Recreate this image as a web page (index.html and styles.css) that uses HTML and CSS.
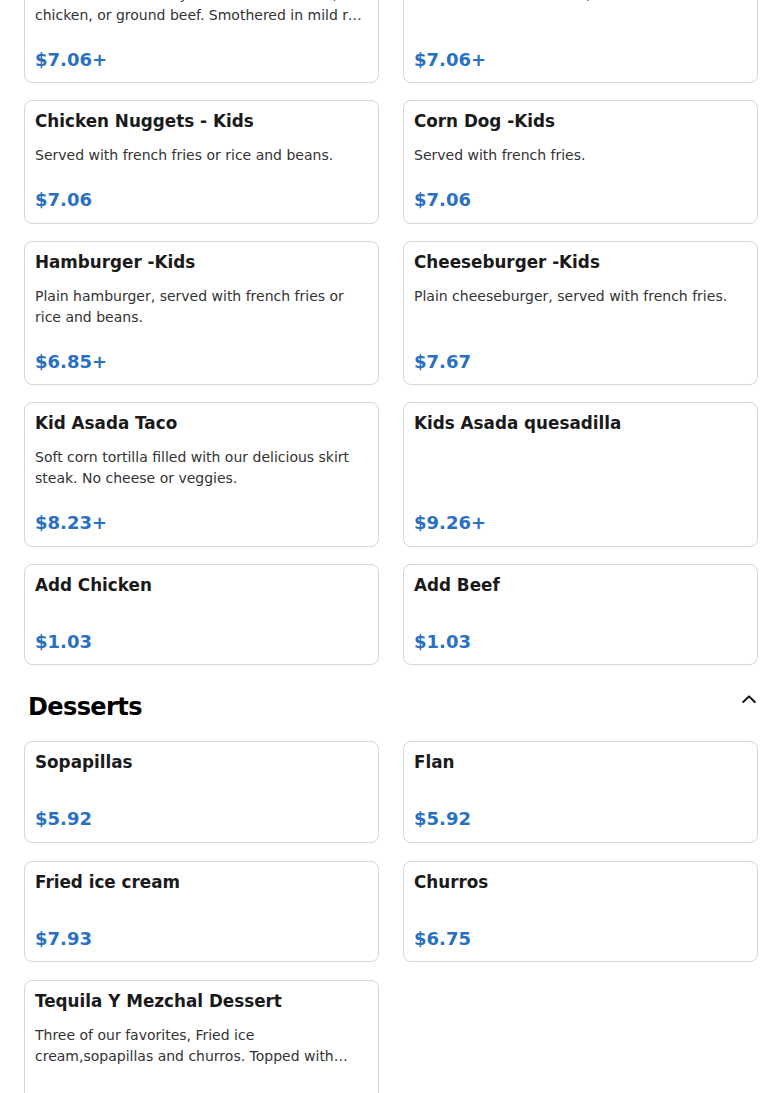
FILE: index.html
```html
<!DOCTYPE html>
<html lang="en">
<head>
<meta charset="utf-8">
<title>Menu</title>
<link rel="stylesheet" href="styles.css">
</head>
<body>
<main class="menu">
  <section class="section section-scrolled">
    <div class="grid">
      <article class="card">
        <h3 class="card-title">Enchiladas - Kids</h3>
        <p class="card-desc">Two enchiladas with your choice of cheese, chicken, or ground beef. Smothered in mild red sauce and topped with cheese.</p>
        <div class="card-price">$7.06+</div>
      </article>
      <article class="card">
        <h3 class="card-title">Burrito - Kids</h3>
        <p class="card-desc">Bean and cheese burrito, with rice and beans.</p>
        <div class="card-price">$7.06+</div>
      </article>
      <article class="card">
        <h3 class="card-title">Chicken Nuggets - Kids</h3>
        <p class="card-desc">Served with french fries or rice and beans.</p>
        <div class="card-price">$7.06</div>
      </article>
      <article class="card">
        <h3 class="card-title">Corn Dog -Kids</h3>
        <p class="card-desc">Served with french fries.</p>
        <div class="card-price">$7.06</div>
      </article>
      <article class="card">
        <h3 class="card-title">Hamburger -Kids</h3>
        <p class="card-desc">Plain hamburger, served with french fries or rice and beans.</p>
        <div class="card-price">$6.85+</div>
      </article>
      <article class="card">
        <h3 class="card-title">Cheeseburger -Kids</h3>
        <p class="card-desc">Plain cheeseburger, served with french fries.</p>
        <div class="card-price">$7.67</div>
      </article>
      <article class="card">
        <h3 class="card-title">Kid Asada Taco</h3>
        <p class="card-desc">Soft corn tortilla filled with our delicious skirt steak. No cheese or veggies.</p>
        <div class="card-price">$8.23+</div>
      </article>
      <article class="card">
        <h3 class="card-title">Kids Asada quesadilla</h3>
        <div class="card-price">$9.26+</div>
      </article>
      <article class="card">
        <h3 class="card-title">Add Chicken</h3>
        <div class="card-price">$1.03</div>
      </article>
      <article class="card">
        <h3 class="card-title">Add Beef</h3>
        <div class="card-price">$1.03</div>
      </article>
    </div>
  </section>

  <section class="section">
    <header class="section-head">
      <h2 class="section-title">Desserts</h2>
      <svg class="chevron" width="14" height="8" viewBox="0 0 14 8" aria-hidden="true">
        <polyline points="1.2,7 7,1.4 12.8,7" fill="none" stroke="#111" stroke-width="2" stroke-linecap="round" stroke-linejoin="round"/>
      </svg>
    </header>
    <div class="grid grid-desserts">
      <article class="card">
        <h3 class="card-title">Sopapillas</h3>
        <div class="card-price">$5.92</div>
      </article>
      <article class="card">
        <h3 class="card-title">Flan</h3>
        <div class="card-price">$5.92</div>
      </article>
      <article class="card">
        <h3 class="card-title">Fried ice cream</h3>
        <div class="card-price">$7.93</div>
      </article>
      <article class="card">
        <h3 class="card-title">Churros</h3>
        <div class="card-price">$6.75</div>
      </article>
      <article class="card">
        <h3 class="card-title">Tequila Y Mezchal Dessert</h3>
        <p class="card-desc">Three of our favorites, Fried ice cream,sopapillas and churros. Topped with whipped cream and cajeta.</p>
        <div class="card-price">$13.52</div>
      </article>
    </div>
  </section>
</main>
</body>
</html>
```

FILE: styles.css
```css
* { box-sizing: border-box; }

html, body {
  margin: 0;
  padding: 0;
  background: #ffffff;
}

body {
  font-family: "DejaVu Sans", Verdana, sans-serif;
  color: #1a1a1a;
  overflow: hidden;
}

.menu {
  padding: 0 24px;
}

.section-scrolled {
  margin-top: -61.5px;
}

.grid {
  display: grid;
  grid-template-columns: 1fr 1fr;
  column-gap: 24px;
  row-gap: 17px;
}

.grid-desserts {
  row-gap: 18px;
}

.card {
  display: flex;
  flex-direction: column;
  border: 1px solid #d6d6d6;
  border-radius: 8px;
  padding: 10px 10px 10.5px;
  background: #fff;
}

.card-title {
  margin: 0 0 12px;
  font-size: 16.8px;
  font-weight: bold;
  line-height: normal;
  color: #1a1a1a;
}

.card-desc {
  margin: 2px 0 -1px;
  font-size: 14px;
  line-height: 21px;
  color: #333333;
  display: -webkit-box;
  -webkit-box-orient: vertical;
  -webkit-line-clamp: 2;
  overflow: hidden;
}

.card-price {
  margin-top: auto;
  padding-top: 23px;
  font-size: 18px;
  line-height: 24px;
  font-weight: bold;
  color: #2a70c2;
}

.section-head {
  display: flex;
  justify-content: space-between;
  align-items: flex-start;
  margin: 24px 0 16px;
  padding: 0 2px 0 4px;
}

.section-title {
  margin: 0;
  font-size: 24px;
  line-height: 36px;
  font-weight: bold;
  letter-spacing: -0.025em;
  color: #000;
}

.chevron {
  display: block;
  margin-top: 6px;
}
```
